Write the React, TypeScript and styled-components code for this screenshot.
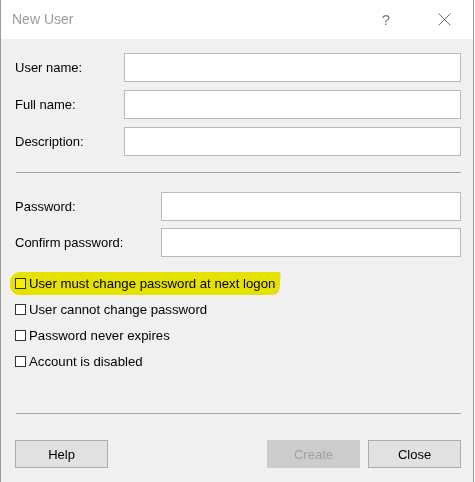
import styled, { createGlobalStyle } from 'styled-components';

const GlobalStyle = createGlobalStyle`
  html, body {
    margin: 0;
    padding: 0;
    background: #ffffff;
  }
  body {
    font-family: "Liberation Sans", Arial, sans-serif;
  }
`;

const Window = styled.div`
  width: 472px;
  height: 482px;
  border-left: 1px solid #9a9a9a;
  border-right: 1px solid #9a9a9a;
  background: #f0f0f0;
  display: flex;
  flex-direction: column;
  box-sizing: content-box;
`;

const TitleBar = styled.div`
  height: 39px;
  background: #ffffff;
  display: flex;
  align-items: center;
  padding-left: 11px;
`;

const Title = styled.span`
  flex: 1;
  font-size: 14px;
  color: #9c9c9c;
  padding-bottom: 1px;
`;

const TitleButton = styled.div`
  width: 58px;
  height: 39px;
  display: flex;
  align-items: center;
  justify-content: center;
  color: #7a7a7a;
  font-size: 15px;
  padding-bottom: 1px;
`;

const Body = styled.div`
  flex: 1;
  display: flex;
  flex-direction: column;
  padding: 14px 12px 0 14px;
`;

const FieldGroup = styled.div<{ $gap: number }>`
  display: flex;
  flex-direction: column;
  gap: ${({ $gap }) => $gap}px;
`;

const FieldRow = styled.div<{ $labelWidth: number }>`
  display: grid;
  grid-template-columns: ${({ $labelWidth }) => $labelWidth}px 1fr;
  align-items: center;
`;

const Label = styled.label`
  font-size: 13px;
  color: #000000;
`;

const TextBox = styled.input`
  height: 29px;
  box-sizing: border-box;
  border: 1px solid #b9b9b9;
  background: #ffffff;
  margin: 0;
  padding: 0 4px;
  font: inherit;
  outline: none;
`;

const Separator = styled.div<{ $above: number; $below: number }>`
  height: 0;
  border-top: 1px solid #a3a3a3;
  margin: ${({ $above, $below }) => `${$above}px 0 ${$below}px 1px`};
`;

const CheckList = styled.div`
  display: flex;
  flex-direction: column;
  align-items: flex-start;
  margin-top: 13px;
`;

const CheckRow = styled.label<{ $marked?: boolean }>`
  position: relative;
  height: 26px;
  display: inline-flex;
  align-items: center;
  gap: 3px;
  font-size: 13.2px;
  color: #000000;

  &::after {
    content: '';
    display: ${({ $marked }) => ($marked ? 'block' : 'none')};
    position: absolute;
    left: -5px;
    right: -5px;
    top: 2px;
    bottom: 1px;
    background: #f4f000;
    mix-blend-mode: multiply;
    border-radius: 9px 3px 7px 11px;
    transform: skewX(-4deg);
  }
`;

const Box = styled.span`
  width: 11px;
  height: 11px;
  box-sizing: border-box;
  border: 1px solid #333333;
  background: #ffffff;
  margin-top: 1px;
`;

const ButtonBar = styled.div`
  display: flex;
  align-items: center;
  gap: 8px;
`;

const Spacer = styled.div`
  flex: 1;
`;

const Button = styled.button<{ $disabled?: boolean }>`
  width: 93px;
  height: 28px;
  box-sizing: border-box;
  margin: 0;
  border: 1px solid ${({ $disabled }) => ($disabled ? '#cccccc' : '#adadad')};
  background: ${({ $disabled }) => ($disabled ? '#cccccc' : '#e1e1e1')};
  color: ${({ $disabled }) => ($disabled ? '#a0a0a0' : '#000000')};
  font-family: inherit;
  font-size: 13px;
  padding: 0;
`;

const CloseGlyph = () => (
  <svg width="13" height="13" viewBox="0 0 13 13">
    <path d="M0.5 0.5 L12.5 12.5 M12.5 0.5 L0.5 12.5" stroke="#6f6f6f" strokeWidth="1" fill="none" />
  </svg>
);

const options = [
  { text: 'User must change password at next logon', marked: true },
  { text: 'User cannot change password' },
  { text: 'Password never expires' },
  { text: 'Account is disabled' },
];

const App = () => (
  <>
    <GlobalStyle />
    <Window>
      <TitleBar>
        <Title>New User</Title>
        <TitleButton>?</TitleButton>
        <TitleButton>
          <CloseGlyph />
        </TitleButton>
      </TitleBar>
      <Body>
        <FieldGroup $gap={8}>
          <FieldRow $labelWidth={109}>
            <Label>User name:</Label>
            <TextBox />
          </FieldRow>
          <FieldRow $labelWidth={109}>
            <Label>Full name:</Label>
            <TextBox />
          </FieldRow>
          <FieldRow $labelWidth={109}>
            <Label>Description:</Label>
            <TextBox />
          </FieldRow>
        </FieldGroup>
        <Separator $above={16} $below={19} />
        <FieldGroup $gap={7}>
          <FieldRow $labelWidth={146}>
            <Label>Password:</Label>
            <TextBox type="password" />
          </FieldRow>
          <FieldRow $labelWidth={146}>
            <Label>Confirm password:</Label>
            <TextBox type="password" />
          </FieldRow>
        </FieldGroup>
        <CheckList>
          {options.map(({ text, marked }) => (
            <CheckRow key={text} $marked={marked}>
              <Box />
              {text}
            </CheckRow>
          ))}
        </CheckList>
        <Separator $above={39} $below={26} />
        <ButtonBar>
          <Button>Help</Button>
          <Spacer />
          <Button $disabled>Create</Button>
          <Button>Close</Button>
        </ButtonBar>
      </Body>
    </Window>
  </>
);

export default App;
